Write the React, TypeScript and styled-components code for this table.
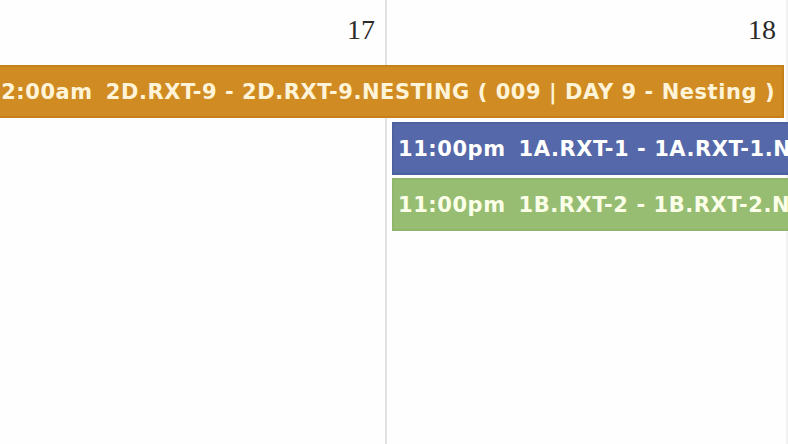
import { createGlobalStyle, styled } from "styled-components";

const GlobalStyle = createGlobalStyle`
  html, body {
    margin: 0;
    padding: 0;
    background: #ffffff;
  }
`;

const Viewport = styled.div`
  width: 788px;
  height: 444px;
  overflow: hidden;
  background: #fefefe;
`;

const WeekGrid = styled.div`
  display: grid;
  grid-template-columns: 387px 401px 200px;
  grid-template-rows: 63px 57px 56px 56px 1fr;
  height: 444px;
  width: 988px;
`;

const DayCell = styled.div<{ $col: number; $faint?: boolean }>`
  grid-column: ${(p) => p.$col};
  grid-row: 1 / -1;
  border-right: 2px solid ${(p) => (p.$faint ? "#f1f1f1" : "#e2e2e2")};
  display: flex;
  justify-content: flex-end;
  align-items: flex-start;
  padding: 13px 10px 0 0;
`;

const DayNumber = styled.span`
  font-family: "Liberation Serif", "DejaVu Serif", serif;
  font-size: 28px;
  line-height: 33px;
  color: #2c2c2c;
`;

const EventBar = styled.div<{ $from: number; $to: number; $row: number; $bg: string; $edge: string; $fg: string }>`
  grid-column: ${(p) => p.$from} / ${(p) => p.$to};
  grid-row: ${(p) => p.$row};
  align-self: start;
  height: 53px;
  box-sizing: border-box;
  display: flex;
  align-items: center;
  gap: 13px;
  background: ${(p) => p.$bg};
  border: 2px solid ${(p) => p.$edge};
  color: ${(p) => p.$fg};
  font-family: "DejaVu Sans", "Noto Sans", sans-serif;
  font-weight: 700;
  font-size: 21px;
  letter-spacing: 0.55px;
  white-space: nowrap;
  overflow: hidden;
  position: relative;
  z-index: 1;
`;

const OrangeBar = styled(EventBar)`
  margin: 2px 4px 0 -20px;
  padding-left: 4px;
`;

const RowBar = styled(EventBar)`
  margin: 2px 0 0 5px;
  padding-left: 4px;
`;

const Time = styled.span``;

const Title = styled.span``;

export default function App() {
  return (
    <Viewport>
      <GlobalStyle />
      <WeekGrid>
        <DayCell $col={1}>
          <DayNumber>17</DayNumber>
        </DayCell>
        <DayCell $col={2} $faint>
          <DayNumber>18</DayNumber>
        </DayCell>
        <DayCell $col={3} />

        <OrangeBar $from={1} $to={3} $row={2} $bg="#d08c22" $edge="#c6801a" $fg="#fff4d8">
          <Time>12:00am</Time>
          <Title>2D.RXT-9 - 2D.RXT-9.NESTING ( 009 | DAY 9 - Nesting )</Title>
        </OrangeBar>
        <RowBar $from={2} $to={4} $row={3} $bg="#5568a9" $edge="#4e619f" $fg="#ffffff">
          <Time>11:00pm</Time>
          <Title>1A.RXT-1 - 1A.RXT-1.NESTING ( 001 | DAY 1 - Nesting )</Title>
        </RowBar>
        <RowBar $from={2} $to={4} $row={4} $bg="#97bd72" $edge="#8fb66a" $fg="#fbffe8">
          <Time>11:00pm</Time>
          <Title>1B.RXT-2 - 1B.RXT-2.NESTING ( 002 | DAY 1 - Nesting )</Title>
        </RowBar>
      </WeekGrid>
    </Viewport>
  );
}
